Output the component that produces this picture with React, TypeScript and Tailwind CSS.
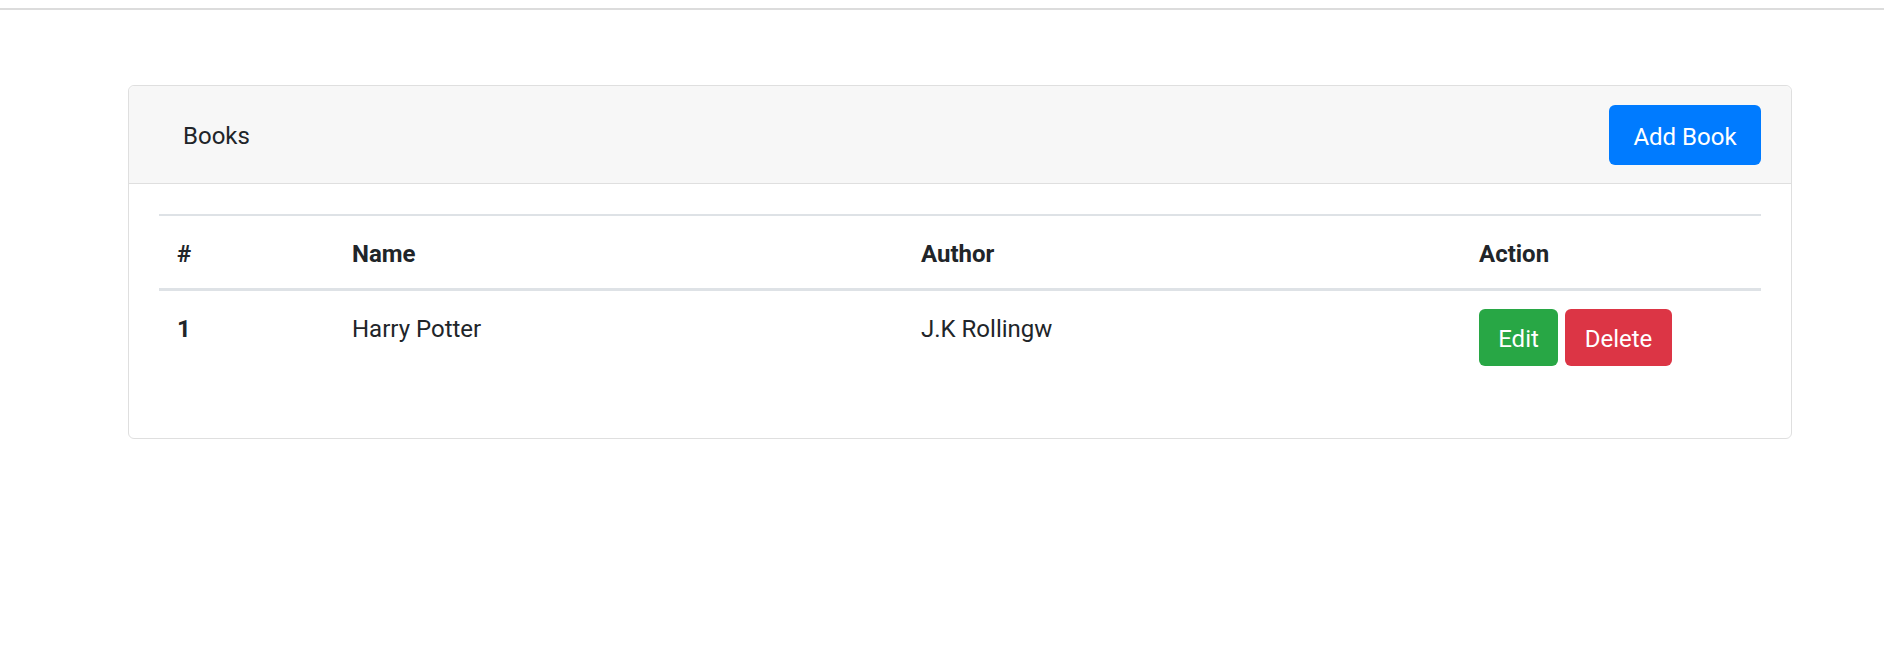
import React from "react";

export default function App() {
  const font = { fontFamily: "Roboto, 'Liberation Sans', sans-serif" };
  return (
    <div className="min-h-[658px] w-full bg-white text-[#212529]" style={font}>
      <div className="pt-[8px]">
        <div className="h-[2px] w-full bg-[#dcdcdc]" />
      </div>
      <div className="ml-[128px] mt-[75px] w-[1664px] rounded-[6px] border border-[#dfdfdf] bg-white">
        <div className="flex h-[98px] items-center justify-between rounded-t-[6px] border-b border-[#dfdfdf] bg-[#f7f7f7] pl-[54px] pr-[30px]">
          <span className="pt-[3px] text-[24px] leading-[36px]">Books</span>
          <button className="flex h-[60px] w-[152px] items-center justify-center rounded-[6px] bg-[#007bff] pt-[4px] text-[24px] leading-[36px] text-white">
            Add Book
          </button>
        </div>
        <div className="px-[30px] pb-[30px] pt-[30px]">
          <table className="mb-[24px] w-[1602px] table-fixed border-collapse text-left text-[24px] leading-[36px]">
            <colgroup>
              <col className="w-[175px]" />
              <col className="w-[569px]" />
              <col className="w-[558px]" />
              <col className="w-[300px]" />
            </colgroup>
            <thead>
              <tr className="border-t-2 border-b-[3px] border-[#dee2e6]">
                <th className="px-[18px] pb-[16px] pt-[20px] font-bold">#</th>
                <th className="px-[18px] pb-[16px] pt-[20px] font-bold">Name</th>
                <th className="px-[18px] pb-[16px] pt-[20px] font-bold">Author</th>
                <th className="px-[18px] pb-[16px] pt-[20px] font-bold">Action</th>
              </tr>
            </thead>
            <tbody>
              <tr>
                <th className="px-[18px] pb-[16px] pt-[20px] align-top font-bold">1</th>
                <td className="px-[18px] pb-[16px] pt-[20px] align-top">Harry Potter</td>
                <td className="px-[18px] pb-[16px] pt-[20px] align-top">J.K Rollingw</td>
                <td className="px-[18px] py-[18px] align-top">
                  <div className="flex gap-[7px]">
                    <button className="flex h-[57px] w-[79px] items-center justify-center rounded-[6px] bg-[#28a745] pt-[2px] text-[24px] text-white">
                      Edit
                    </button>
                    <button className="flex h-[57px] w-[107px] items-center justify-center rounded-[6px] bg-[#dc3545] pt-[2px] text-[24px] text-white">
                      Delete
                    </button>
                  </div>
                </td>
              </tr>
            </tbody>
          </table>
        </div>
      </div>
    </div>
  );
}
